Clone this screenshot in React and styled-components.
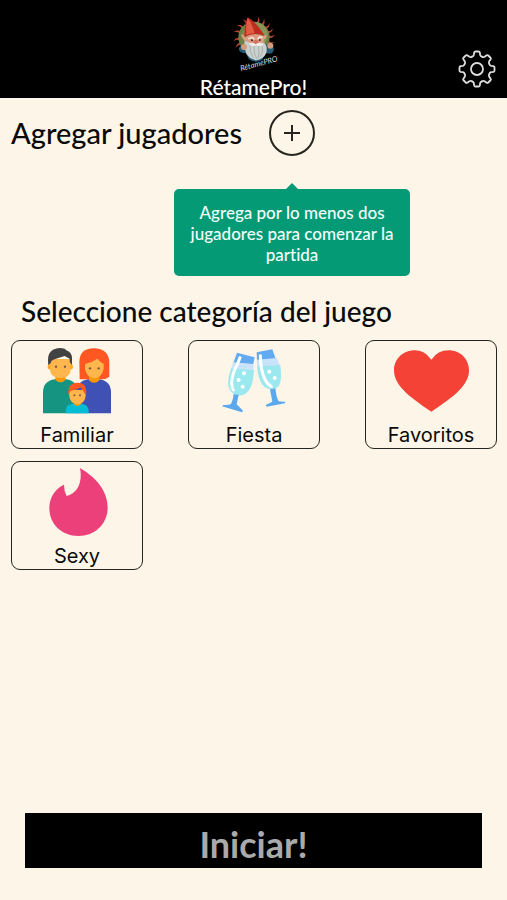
import React from "react";
import styled, { createGlobalStyle } from "styled-components";

const GlobalStyle = createGlobalStyle`
  *, *::before, *::after { box-sizing: border-box; }
  body {
    margin: 0;
    background: #fdf6e8;
    color: #0a0a0a;
    font-family: Lato, sans-serif;
    font-variant-ligatures: none;
  }
  button { font: inherit; color: inherit; cursor: pointer; }
`;

const Screen = styled.div`
  min-height: 100vh;
  display: flex;
  flex-direction: column;
`;

const Header = styled.header`
  display: grid;
  grid-template-columns: 1fr auto 1fr;
  align-items: end;
  height: 98px;
  padding: 0 11px;
  background: #000;
  color: #fff;
`;

const Brand = styled.div`
  grid-column: 2;
  display: flex;
  flex-direction: column;
  align-items: center;
`;

const AppName = styled.h1`
  margin: 0;
  font-size: 21px;
  line-height: 22px;
  font-weight: 500;
`;

const SettingsButton = styled.button`
  justify-self: end;
  display: flex;
  margin-bottom: 10px;
  padding: 0;
  border: 0;
  background: none;
`;

const Main = styled.main`
  flex: 1;
  padding: 12px 10px 0 11px;
`;

const PlayersRow = styled.section`
  display: flex;
  align-items: center;
  gap: 27px;
  height: 46px;
`;

const Heading = styled.h2`
  margin: 0;
  font-size: 29px;
  line-height: 36px;
  font-weight: 500;
`;

const CategoryHeading = styled(Heading)`
  margin: 137px 0 11px 10px;
  font-size: 28px;
`;

const AddPlayer = styled.div`
  position: relative;
`;

const AddButton = styled.button`
  display: flex;
  align-items: center;
  justify-content: center;
  width: 46px;
  height: 46px;
  padding: 0;
  border: 2px solid #26241f;
  border-radius: 50%;
  background: none;
`;

const Tooltip = styled.div`
  position: absolute;
  top: 79px;
  left: 50%;
  transform: translateX(-50%);
  width: 236px;
  padding: 13px 10px 11px;
  border-radius: 5px;
  background: #059a76;
  color: #f4fffb;
  font-size: 17px;
  line-height: 21px;
  font-weight: 500;
  text-align: center;

  &::before {
    content: "";
    position: absolute;
    left: 50%;
    bottom: 100%;
    transform: translateX(-50%);
    border: 6px solid transparent;
    border-top: 0;
    border-bottom-color: #059a76;
  }
`;

const Categories = styled.div`
  display: grid;
  grid-template-columns: repeat(auto-fill, 132px);
  justify-content: space-between;
  row-gap: 12px;
`;

const CategoryCard = styled.button`
  display: flex;
  flex-direction: column;
  align-items: center;
  height: 109px;
  padding: 6px 0 0;
  border: 1px solid #26241f;
  border-radius: 9px;
  background: none;
`;

const IconArea = styled.span`
  display: flex;
  align-items: center;
  height: 68px;
`;

const CategoryName = styled.span`
  margin-top: 7px;
  font-family: Inter, sans-serif;
  font-size: 20px;
  line-height: 26px;
`;

const Footer = styled.footer`
  padding: 0 25px 32px;
`;

const StartButton = styled.button`
  display: block;
  width: 100%;
  height: 55px;
  padding: 6px 0 0;
  border: 0;
  background: #000;
  && {
    color: #aaa;
    font-size: 36px;
    line-height: 44px;
    font-weight: 700;
  }
`;

const rays = [-205, -186, -160, -140, -118, -75, -57, -38, -20, -2, 18];

function GnomeLogo() {
  return (
    <svg width="52" height="62" viewBox="112 36 156 186" aria-hidden="true">
      <g fill="#b9402f">
        {rays.map((a) => (
          <path key={a} d="M231 102 L243 104 L254 101 L244 109 L231 110Z" transform={`rotate(${a} 190 106)`} />
        ))}
      </g>
      <circle cx="190" cy="106" r="47" fill="#6f7f45" />
      <circle cx="194" cy="98" r="37" fill="#8b9558" />
      <path d="M144 141 Q150 125 166 128 L212 130 Q230 122 248 136 Q254 148 240 155 L222 153 L215 174 Q195 186 174 171 L166 154 Q148 154 144 141Z" fill="#285d77" />
      <path d="M153 104 Q149 94 157 98 Q165 105 171 116 L162 117Z" fill="#dca183" />
      <path d="M222 100 Q230 95 225 108 L216 117 L211 109Z" fill="#dca183" />
      <path d="M165 106 Q186 89 218 102 L220 130 Q198 145 170 128Z" fill="#df9b80" />
      <path d="M161 105 Q160 70 171 46 Q196 59 222 101 Q189 90 161 105Z" fill="#bd2c20" />
      <path d="M171 48 Q184 64 192 94 Q177 93 167 100 Q164 73 171 48Z" fill="#e35b42" />
      <path d="M162 116 Q177 122 188 125 Q200 118 222 124 Q231 133 227 153 Q219 171 198 175 Q177 171 167 155 Q159 135 162 116Z" fill="#cbd1ce" />
      <path d="M178 127 Q175 149 188 167 M190 132 Q187 154 199 171 M204 132 Q207 155 202 170 M215 132 Q219 149 209 164" fill="none" stroke="#a8b1af" strokeWidth="3" />
      <path d="M173 110 L184 106 L191 112 M201 112 L207 105 L216 107" fill="none" stroke="#eee5d8" strokeWidth="5" />
      <circle cx="184" cy="115" r="3" fill="#362823" />
      <circle cx="207" cy="114" r="3" fill="#362823" />
      <ellipse cx="196" cy="120" rx="8" ry="6" fill="#d56f60" />
      <path d="M174 126 Q186 120 195 127 Q207 119 219 128 Q204 134 196 130 Q184 136 174 126Z" fill="#f0f0eb" />
      <circle cx="160" cy="135" r="9" fill="#d49b7f" />
      <circle cx="239" cy="131" r="9" fill="#d49b7f" />
      <text x="151" y="207" transform="rotate(-15 151 207)" fill="#ddd" fontFamily="Lato, sans-serif" fontSize="23" fontStyle="italic">RétamePRO</text>
    </svg>
  );
}

const teeth = [0, 45, 90, 135, 180, 225, 270, 315];

function GearIcon() {
  return (
    <svg width="38" height="38" viewBox="-19 -19 38 38" fill="none" stroke="#ddd" strokeWidth="1.8" strokeLinecap="round" aria-hidden="true">
      <circle r="6" />
      {teeth.map((a) => (
        <path key={a} transform={`rotate(${a})`} d="M-5.1 -12.3 Q-3.5 -12.7 -3.2 -14 L-2.8 -16.5 Q-2.6 -17.5 -1.6 -17.5 H1.6 Q2.6 -17.5 2.8 -16.5 L3.2 -14 Q3.5 -12.7 5.1 -12.3" />
      ))}
    </svg>
  );
}

function PlusIcon() {
  return (
    <svg width="16" height="16" viewBox="0 0 16 16" stroke="#26241f" strokeWidth="2" aria-hidden="true">
      <path d="M8 0V16M0 8H16" />
    </svg>
  );
}

function FamilyIcon() {
  return (
    <svg width="68" height="66" viewBox="128 40 204 198" aria-hidden="true">
      <path d="M128 236V174Q128 139 163 134H198Q232 139 232 174V236Z" fill="#159581" />
      <path d="M228 236V174Q229 139 262 134H297Q332 139 332 174V236Z" fill="#3f51b5" />
      <path d="M165 119H196V135Q181 151 165 135Z" fill="#ff9800" />
      <path d="M147 73H212V101Q210 130 180 131Q150 130 148 101Z" fill="#ffb74d" />
      <ellipse cx="147" cy="96" rx="5" ry="8" fill="#ffa726" />
      <ellipse cx="213" cy="96" rx="5" ry="8" fill="#ffa726" />
      <path d="M144 91Q139 55 158 45Q174 37 193 42L198 47Q215 52 215 72V91L208 82V72L193 64L165 73Q151 77 151 86Z" fill="#424242" />
      <path d="M238 134L237 83Q237 41 281 41Q326 42 327 85V126Q318 134 303 134Z" fill="#ff5722" />
      <path d="M266 122H297V137Q281 152 266 137Z" fill="#ff9800" />
      <path d="M254 88Q277 82 291 72Q298 81 310 87V103Q304 129 282 131Q259 128 254 104Z" fill="#ffb74d" />
      <g fill="#795548">
        <circle cx="167" cy="96" r="3.5" /><circle cx="194" cy="96" r="3.5" />
        <circle cx="269" cy="101" r="3.5" /><circle cx="295" cy="101" r="3.5" />
      </g>
      <path d="M196 236V225Q199 207 220 207H242Q262 208 265 226V236Z" fill="#00bcd4" />
      <path d="M221 203H242V209Q231 219 221 209Z" fill="#ff9800" />
      <path d="M206 166H256V183Q254 207 231 209Q209 207 207 184Z" fill="#ffb74d" />
      <path d="M204 180Q202 145 230 144Q257 143 258 169L257 182L250 171L240 158Q231 166 212 168Z" fill="#ff5722" />
      <circle cx="222" cy="182" r="3" fill="#795548" /><circle cx="239" cy="182" r="3" fill="#795548" />
    </svg>
  );
}

function ToastIcon() {
  return (
    <svg width="64" height="64" viewBox="124 46 192 192" aria-hidden="true">
      <path d="M169 57L222 71L218 91L158 88Z" fill="#64aaf0" />
      <path d="M158 86L219 92L218 109L151 105Z" fill="#c9e3fa" />
      <path d="M151 104L220 109Q218 164 194 181Q178 190 158 180Q137 166 144 130Z" fill="#9ce8ef" />
      <path d="M159 181Q167 184 174 183L168 212Q176 220 187 231L184 236L124 218L128 214Q144 215 151 211Q158 198 159 181Z" fill="#5ba8ed" />
      <path d="M178 72L171 90Q153 121 153 149Q153 162 158 169" fill="none" stroke="#fff" strokeWidth="9" strokeLinecap="round" />
      <path d="M228 56L275 47L285 75L229 85Z" fill="#64aaf0" />
      <path d="M229 78L288 73L298 95L229 99Z" fill="#c9e3fa" />
      <path d="M229 98L299 94Q306 146 291 160Q276 171 258 164Q233 151 229 98Z" fill="#9ce8ef" />
      <path d="M268 167Q277 167 284 163Q287 192 294 203Q304 205 314 204L313 209L258 219L255 214L275 204Z" fill="#5ba8ed" />
      <path d="M239 66L240 88Q244 121 254 139Q261 153 272 158" fill="none" stroke="#fff" strokeWidth="9" strokeLinecap="round" />
      <g fill="#fff">
        <circle cx="190" cy="119" r="6" /><circle cx="174" cy="139" r="6" /><circle cx="186" cy="159" r="6" />
        <circle cx="266" cy="114" r="6" /><circle cx="282" cy="133" r="6" />
      </g>
    </svg>
  );
}

function HeartIcon() {
  return (
    <svg width="75" height="62" viewBox="110 45 225 186" aria-hidden="true">
      <path d="M222 74Q202 46 172 46C139 46 110 71 110 106C110 157 171 195 222 230C274 195 335 157 335 106C335 71 307 46 274 46Q241 46 222 74Z" fill="#f44336" />
    </svg>
  );
}

function FlameIcon() {
  return (
    <svg width="62" height="68" viewBox="138 40 186 204" aria-hidden="true">
      <path d="M240 40C285 66 323 107 323 158C323 208 285 244 235 244C185 244 148 208 148 160C148 127 168 100 192 90Q192 110 200 124C230 118 249 86 240 40Z" fill="#ec407a" />
    </svg>
  );
}

const categories = [
  { name: "Familiar", Icon: FamilyIcon },
  { name: "Fiesta", Icon: ToastIcon },
  { name: "Favoritos", Icon: HeartIcon },
  { name: "Sexy", Icon: FlameIcon },
];

export default function App() {
  return (
    <Screen>
      <GlobalStyle />
      <Header>
        <Brand>
          <GnomeLogo />
          <AppName>RétamePro!</AppName>
        </Brand>
        <SettingsButton aria-label="Ajustes"><GearIcon /></SettingsButton>
      </Header>
      <Main>
        <PlayersRow>
          <Heading>Agregar jugadores</Heading>
          <AddPlayer>
            <AddButton aria-label="Agregar jugador" aria-describedby="players-hint"><PlusIcon /></AddButton>
            <Tooltip id="players-hint" role="tooltip">Agrega por lo menos dos jugadores para comenzar la partida</Tooltip>
          </AddPlayer>
        </PlayersRow>
        <CategoryHeading>Seleccione categoría del juego</CategoryHeading>
        <Categories>
          {categories.map(({ name, Icon }) => (
            <CategoryCard key={name}>
              <IconArea><Icon /></IconArea>
              <CategoryName>{name}</CategoryName>
            </CategoryCard>
          ))}
        </Categories>
      </Main>
      <Footer>
        <StartButton>Iniciar!</StartButton>
      </Footer>
    </Screen>
  );
}
